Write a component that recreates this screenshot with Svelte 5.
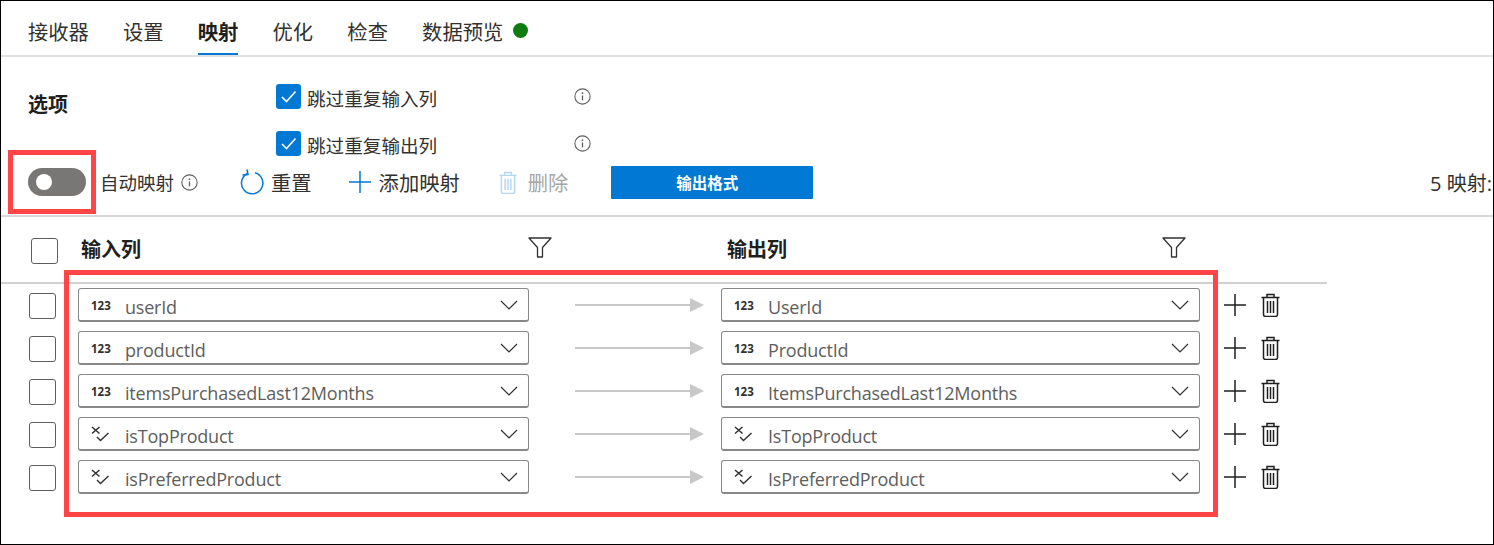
<script>
  const tabs = ['接收器', '设置', '映射', '优化', '检查', '数据预览'];
  const rows = [
    { type: 'num', from: 'userId', to: 'UserId' },
    { type: 'num', from: 'productId', to: 'ProductId' },
    { type: 'num', from: 'itemsPurchasedLast12Months', to: 'ItemsPurchasedLast12Months' },
    { type: 'bool', from: 'isTopProduct', to: 'IsTopProduct' },
    { type: 'bool', from: 'isPreferredProduct', to: 'IsPreferredProduct' }
  ];
  const options = ['跳过重复输入列', '跳过重复输出列'];
</script>

{#snippet info()}
  <svg class="info" viewBox="0 0 16 16" width="17" height="17" aria-hidden="true">
    <circle cx="8" cy="8" r="7.2" fill="none" stroke="#605e5c" stroke-width="1" />
    <path d="M8 7v4.6" stroke="#605e5c" stroke-width="1.2" fill="none" />
    <circle cx="8" cy="4.9" r="0.8" fill="#605e5c" />
  </svg>
{/snippet}

{#snippet filter()}
  <svg viewBox="0 0 24 21" width="24" height="21" aria-hidden="true">
    <path d="M1 1h22l-8.5 9.5V20h-5v-9.500z" fill="none" stroke="#323130" stroke-width="1.300" stroke-linejoin="round" />
  </svg>
{/snippet}

{#snippet trash(color, w, h)}
  <svg viewBox="0 0 19 24" width={w} height={h} aria-hidden="true">
    <path d="M0.500 4.500h18M6 4.500V1.500h7v3M2.500 4.500v17a2 2 0 0 0 2 2h10a2 2 0 0 0 2-2v-17M6.500 8v12M9.500 8v12M12.500 8v12" fill="none" stroke={color} stroke-width="1.500" />
  </svg>
{/snippet}

{#snippet field(type, text)}
  <div class="select">
    {#if type === 'num'}
      <span class="num">123</span>
    {:else}
      <svg class="bool" viewBox="0 0 18 16" width="18" height="16" aria-hidden="true">
        <path d="M1 1l7.500 6.500M8.500 1L1 7.500" stroke="#323130" stroke-width="1.500" fill="none" />
        <path d="M6 11l3.500 3.500L17.500 7" stroke="#323130" stroke-width="1.400" fill="none" />
      </svg>
    {/if}
    <span class="value">{text}</span>
    <svg class="chev" viewBox="0 0 18 10" width="18" height="10" aria-hidden="true">
      <path d="M1 1l8 8 8-8" fill="none" stroke="#323130" stroke-width="1.200" />
    </svg>
  </div>
{/snippet}

<div class="frame">
  <nav class="tabs">
    {#each tabs as tab, i}
      <span class="tab" class:active={i === 2}>{tab}</span>
    {/each}
    <span class="dot"></span>
  </nav>

  <section class="options">
    <h2>选项</h2>
    <div class="opt-list">
      {#each options as option}
        <div class="opt">
          <span class="check">
            <svg viewBox="0 0 25 25" width="25" height="25" aria-hidden="true">
              <path d="M6 13l4.500 4.500L19.500 7.500" fill="none" stroke="#fff" stroke-width="1.600" />
            </svg>
          </span>
          <span class="opt-label">{option}</span>
          {@render info()}
        </div>
      {/each}
    </div>
  </section>

  <div class="toolbar">
    <span class="toggle"><span class="knob"></span></span>
    <span class="auto">自动映射</span>
    {@render info()}
    <button class="tool reset">
      <svg viewBox="0 0 24 26" width="24" height="26" aria-hidden="true">
        <path d="M7.500 4.500A10.700 10.700 0 1 0 15 3.800" fill="none" stroke="#0078d4" stroke-width="1.500" />
        <path d="M7 0.500l1 5-5.500 0.500" fill="none" stroke="#0078d4" stroke-width="1.500" />
      </svg>
      重置
    </button>
    <button class="tool add">
      <svg viewBox="0 0 22 22" width="22" height="22" aria-hidden="true">
        <path d="M11 0v22M0 11h22" stroke="#0078d4" stroke-width="1.500" fill="none" />
      </svg>
      添加映射
    </button>
    <button class="tool del">
      {@render trash('#b3d6f2', 18, 23)}
      删除
    </button>
    <button class="format">输出格式</button>
    <span class="count">5 映射:</span>
  </div>

  <div class="head">
    <span class="box"></span>
    <span class="col-a">输入列</span>
    <span class="f-a">{@render filter()}</span>
    <span class="col-b">输出列</span>
    <span class="f-b">{@render filter()}</span>
  </div>

  <div class="rows">
    {#each rows as row}
      <div class="row">
        <span class="box small"></span>
        {@render field(row.type, row.from)}
        <div class="arrow"><span class="shaft"></span><span class="tip"></span></div>
        {@render field(row.type, row.to)}
        <div class="actions">
          <svg viewBox="0 0 22 22" width="22" height="22" aria-hidden="true">
            <path d="M11 0v22M0 11h22" stroke="#201f1e" stroke-width="1.500" fill="none" />
          </svg>
          {@render trash('#201f1e', 19, 24)}
        </div>
      </div>
    {/each}
  </div>

  <div class="mark mark-toggle"></div>
  <div class="mark mark-rows"></div>
</div>

<style>
  :global(body) { margin: 0; background: #fff; }
  .frame {
    position: relative;
    width: 1494px;
    height: 545px;
    box-sizing: border-box;
    border: 1px solid #000;
    overflow: hidden;
    background: #fff;
    color: #323130;
    font-family: "Open Sans", "Noto Sans CJK SC", sans-serif;
  }
  .tabs {
    display: flex;
    align-items: flex-start;
    padding-left: 27px;
    gap: 34.200px;
    border-bottom: 2px solid #e1e1e1;
    box-sizing: border-box;
    height: 56px;
    font-size: 20.300px;
  }
  .tab { position: relative; line-height: 62px; height: 54px; }
  .tab.active { font-weight: 700; color: #201f1e; }
  .tab.active::after {
    content: "";
    position: absolute;
    left: 0; right: 0; bottom: 0;
    height: 2px;
    background: #0078d4;
  }
  .dot {
    width: 15px; height: 15px;
    border-radius: 50%;
    background: #107c10;
    margin: 22px 0 0 -24px;
  }
  .options {
    display: flex;
    height: 108px;
    padding-left: 27px;
  }
  h2 {
    margin: 0;
    width: 248px;
    padding-top: 34px;
    font-size: 20px;
    line-height: 28px;
    font-weight: 700;
    color: #201f1e;
  }
  .opt-list { display: flex; flex-direction: column; gap: 22px; padding-top: 27px; }
  .opt { display: flex; align-items: center; height: 25px; width: 315px; }
  .check {
    display: block;
    width: 25px; height: 25px;
    background: #0078d4;
    border-radius: 3px;
    flex: none;
  }
  .check svg { display: block; }
  .opt-label { margin-left: 6px; font-size: 18.600px; width: 267px; flex: none; position: relative; top: 1px; }
  .toolbar {
    display: flex;
    align-items: center;
    height: 36px;
    margin-top: -1px;
    padding-left: 27px;
    position: relative;
    font-size: 20.300px;
  }
  .toggle {
    display: block;
    flex: none;
    width: 58px; height: 28px;
    border-radius: 14px;
    background: #797775;
    position: relative;
  }
  .knob {
    position: absolute;
    left: 8px; top: 6px;
    width: 16px; height: 16px;
    border-radius: 50%;
    background: #fff;
  }
  .auto { margin: 0 7px 0 14px; font-size: 18.500px; }
  button {
    font: inherit;
    color: inherit;
    background: none;
    border: 0;
    padding: 0;
    display: flex;
    align-items: center;
  }
  .reset { margin-left: 42px; gap: 7px; }
  .add { margin-left: 37px; gap: 8px; }
  .del { margin-left: 39px; gap: 11px; color: #a6a6a6; }
  .format {
    margin-left: 43px;
    width: 202px;
    height: 33px;
    padding-right: 10px;
    justify-content: center;
    background: #0078d4;
    color: #fff;
    font-size: 15.500px;
    font-weight: 700;
    border-radius: 1px;
  }
  .count { margin-left: auto; margin-right: 1px; white-space: nowrap; font-size: 20px; }
  .head {
    position: relative;
    margin-top: 15px;
    border-top: 2px solid #d8d8d8;
    height: 66px;
  }
  .head::after {
    content: "";
    position: absolute;
    left: 0;
    top: 65px;
    width: 1326px;
    height: 2px;
    background: #d0d0d0;
  }
  .head > * { position: absolute; }
  .head .box { left: 30px; top: 21px; width: 27px; height: 26px; }
  .col-a, .col-b { font-size: 20px; font-weight: 700; line-height: 28px; top: 19px; color: #201f1e; }
  .col-a { left: 80px; }
  .col-b { left: 726px; }
  .f-a { left: 527px; top: 20px; }
  .f-b { left: 1161px; top: 20px; }
  .box {
    display: block;
    box-sizing: border-box;
    border: 1px solid #605e5c;
    border-radius: 3px;
    background: #fff;
  }
  .rows { display: flex; flex-direction: column; margin-top: 0.500px; }
  .row {
    display: grid;
    grid-template-columns: 49px 451px 192px 479px auto;
    align-items: center;
    height: 43px;
    padding-left: 28px;
  }
  .box.small { width: 27px; height: 26px; margin-top: 2px; }
  .select {
    height: 34px;
    box-sizing: border-box;
    border: 1px solid #8a8886;
    border-bottom-width: 2px;
    border-radius: 3px;
    display: flex;
    align-items: center;
    padding-left: 12px;
    padding-right: 10px;
    background: #fff;
  }
  .num { width: 34px; font-size: 11.500px; font-weight: 700; color: #323130; position: relative; top: 1px; flex: none; }
  .bool { width: 18px; margin-right: 16px; position: relative; flex: none; }
  .value { font-size: 18px; letter-spacing: -0.200px; color: #605e5c; line-height: 24px; position: relative; top: 2px; }
  .chev { margin-left: auto; position: relative; }
  .arrow {
    margin-left: 46px;
    display: flex;
    align-items: center;
  }
  .shaft { width: 115px; height: 2px; background: #c8c8c8; flex: none; }
  .tip {
    width: 0; height: 0;
    border-left: 14px solid #c8c8c8;
    border-top: 7px solid transparent;
    border-bottom: 7px solid transparent;
  }
  .actions { display: flex; align-items: center; gap: 15px; margin-left: 24px; }
  .actions svg, .del svg { display: block; flex: none; }
  .mark {
    position: absolute;
    border: 5px solid #ff4545;
    box-sizing: border-box;
    pointer-events: none;
  }
  .mark-toggle { left: 7px; top: 149px; width: 88px; height: 64px; }
  .mark-rows { left: 63px; top: 269px; width: 1154px; height: 247px; }
</style>
